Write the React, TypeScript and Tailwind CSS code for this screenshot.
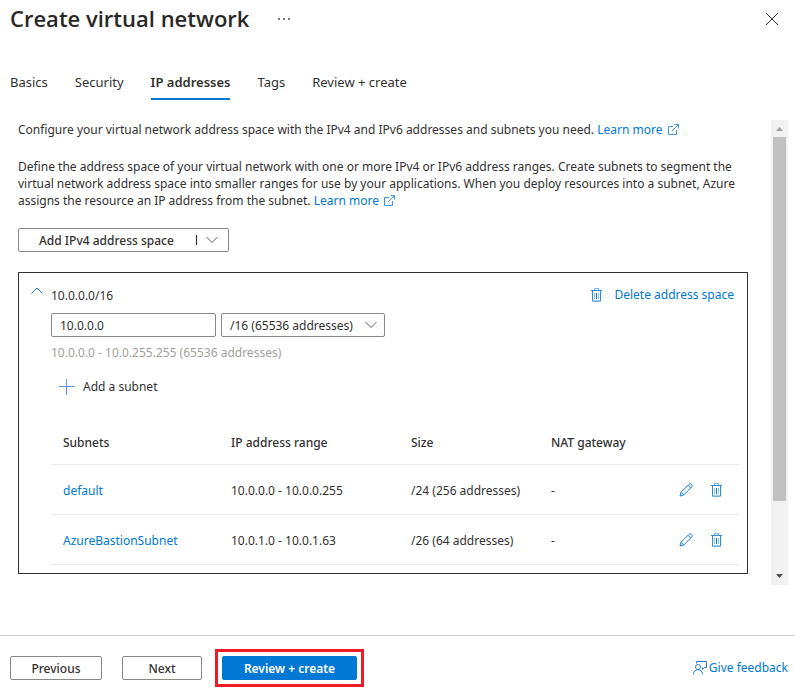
import React from "react";

const tabs = ["Basics", "Security", "IP addresses", "Tags", "Review + create"];

const subnets = [
  { name: "default", range: "10.0.0.0 - 10.0.0.255", size: "/24 (256 addresses)", nat: "-" },
  { name: "AzureBastionSubnet", range: "10.0.1.0 - 10.0.1.63", size: "/26 (64 addresses)", nat: "-" },
];

function Chevron({ up = false, className = "" }: { up?: boolean; className?: string }) {
  return (
    <svg width="12" height="8" viewBox="0 0 12 8" fill="none" stroke="currentColor" aria-hidden="true" className={className}>
      <path d={up ? "M.5 6.5 6 1l5.500 5.500" : "M.5 1 6 6.500 11.500 1"} />
    </svg>
  );
}

function External() {
  return (
    <svg width="11" height="11" viewBox="0 0 11 11" fill="none" stroke="currentColor" aria-hidden="true" className="ml-[2px] inline-block align-[-1px] text-[#3d96de]">
      <path d="M5 2.500H.5v8h8V6M6.500.5h4v4M10.500.5 4 7" />
    </svg>
  );
}

function Trash() {
  return (
    <svg width="12" height="14" viewBox="0 0 12 14" fill="none" aria-hidden="true" className="shrink-0">
      <path d="M0 2.500h11M1.500 2.500v10.500h8V2.500" stroke="#2b8cdb" />
      <path d="M3.500 2V.5h4V2M1.500 13.500h8" stroke="#6db1e8" />
      <path d="M3.500 5v6M7.500 5v6" stroke="#8cc2ee" />
      <path d="M5.500 5v6" stroke="#0078d4" />
    </svg>
  );
}

function Pencil() {
  return (
    <svg width="14" height="14" viewBox="0 0 14 14" fill="none" stroke="#1682d8" strokeLinejoin="round" aria-hidden="true">
      <path d="M1 13l1-3.700L10 1.300c1.600-1.600 4.300 1 2.700 2.700L4.700 12 1 13ZM2 9.300 4.700 12M9 2.300 11.700 5" />
    </svg>
  );
}

function Feedback() {
  return (
    <svg width="14" height="14" viewBox="0 0 14 14" fill="none" stroke="#2b7cd0" aria-hidden="true">
      <circle cx="5" cy="6" r="2.500" />
      <path d="M.5 13.500C.8 7.200 9.200 7.200 9.500 13.500M3.500 2.500v-2h10v6h-2l-2 2v-2" />
    </svg>
  );
}

export default function App() {
  return (
    <div className="flex min-h-screen flex-col bg-white font-['Noto_Sans','Open_Sans',sans-serif] text-[12px] leading-[17px] text-[#323130]">
      <header className="flex h-[38px] items-center pr-4 pl-[10px]">
        <h1 className="pb-[2px] font-['Open_Sans','Noto_Sans',sans-serif] text-[22px] leading-8 font-semibold text-[#292827]">Create virtual network</h1>
        <button type="button" aria-label="More options" className="ml-[25px] flex gap-[3px] p-1">
          <span className="size-[2px] bg-[#7a7876]" />
          <span className="size-[2px] bg-[#7a7876]" />
          <span className="size-[2px] bg-[#7a7876]" />
        </button>
        <button type="button" aria-label="Close" className="ml-auto">
          <svg width="14" height="14" viewBox="0 0 14 14" stroke="#323130" aria-hidden="true">
            <path d="m1 1 12 12M13 1 1 13" />
          </svg>
        </button>
      </header>

      <nav aria-label="Steps" className="mt-8 flex gap-[27px] pl-[10px] text-[13px]">
        {tabs.map((tab) => (
          <a
            key={tab}
            href="#"
            aria-current={tab === "IP addresses" ? "step" : undefined}
            className={
              tab === "IP addresses"
                ? "h-[30px] border-b-2 border-[#0078d4] pt-1 font-semibold"
                : "h-[30px] pt-1"
            }
          >
            {tab}
          </a>
        ))}
      </nav>

      <div className="mt-5 mr-[7px] mb-[50px] ml-[18px] flex flex-1">
        <main className="min-w-0 flex-1 pr-[23px]">
          <p className="mt-[1px]">
            Configure your virtual network address space with the IPv4 and IPv6 addresses and subnets you need.{" "}
            <a href="#" className="text-[#0078d4]">Learn more <External /></a>
          </p>
          <p className="mt-5">
            Define the address space of your virtual network with one or more IPv4 or IPv6 address ranges. Create subnets to segment the virtual network address space into smaller ranges for use by your applications. When you deploy resources into a subnet, Azure assigns the resource an IP address from the subnet.{" "}
            <a href="#" className="text-[#0078d4]">Learn more <External /></a>
          </p>

          <button type="button" className="mt-[19px] flex h-6 w-[211px] items-center rounded-[2px] border border-[#8a8886] pr-[10px] pl-5 font-medium">
            Add IPv4 address space
            <span className="ml-auto h-[10px] w-px bg-[#201f1e]" />
            <Chevron className="ml-[9px] text-[#605e5c]" />
          </button>

          <section className="mt-5 border border-[#323130] pt-[13px] pr-2 pb-2 pl-8">
            <div className="-ml-5 flex items-start">
              <button type="button" className="flex items-start gap-2 pt-[1px]">
                <Chevron up className="text-[#1682d8]" />
                10.0.0.0/16
              </button>
              <button type="button" className="mr-[5px] ml-auto flex items-center gap-[11px] text-[#0078d4]">
                <Trash />
                Delete address space
              </button>
            </div>
            <div className="mt-[9px] flex gap-[5px]">
              <input
                aria-label="Address space"
                defaultValue="10.0.0.0"
                className="h-6 w-[165px] rounded-[2px] border border-[#8a8886] px-2"
              />
              <div className="relative">
                <select aria-label="Address space size" className="h-6 w-[164px] appearance-none rounded-[2px] border border-[#8a8886] bg-white pr-6 pl-2">
                  <option>/16 (65536 addresses)</option>
                </select>
                <Chevron className="pointer-events-none absolute top-2 right-2 text-[#605e5c]" />
              </div>
            </div>
            <p className="mt-[7px] text-[#a19f9d]">10.0.0.0 - 10.0.255.255 (65536 addresses)</p>
            <button type="button" className="mt-[17px] ml-2 flex items-center gap-2">
              <svg width="16" height="16" viewBox="0 0 16 16" stroke="#5b93d6" aria-hidden="true">
                <path d="M7.500 0v16M0 7.500h16" />
              </svg>
              Add a subnet
            </button>

            <table className="mt-[25px] w-full table-fixed text-left">
              <thead>
                <tr className="h-11 border-b border-[#edebe9]">
                  <th className="w-[168px] pt-[2px] pl-3 font-medium">Subnets</th>
                  <th className="w-[180px] pt-[2px] pl-3 font-medium">IP address range</th>
                  <th className="w-[140px] pt-[2px] pl-3 font-medium">Size</th>
                  <th className="pt-[2px] pl-3 font-medium">NAT gateway</th>
                  <th className="w-[72px]" aria-label="Actions" />
                </tr>
              </thead>
              <tbody>
                {subnets.map((s) => (
                  <tr key={s.name} className="h-[50px] border-b border-[#edebe9]">
                    <td className="pt-[2px] pl-3"><a href="#" className="text-[#0078d4]">{s.name}</a></td>
                    <td className="pt-[2px] pl-3">{s.range}</td>
                    <td className="pt-[2px] pl-3">{s.size}</td>
                    <td className="pt-[2px] pl-3">{s.nat}</td>
                    <td className="pt-[2px]">
                      <div className="flex items-center gap-[18px] pl-3">
                        <button type="button" aria-label={`Edit ${s.name}`}><Pencil /></button>
                        <button type="button" aria-label={`Delete ${s.name}`}><Trash /></button>
                      </div>
                    </td>
                  </tr>
                ))}
              </tbody>
            </table>
          </section>
        </main>

        <div aria-hidden="true" className="flex w-[17px] flex-col items-center bg-[#f1f1f1]">
          <svg width="17" height="17" viewBox="0 0 17 17" fill="#a3a3a3"><path d="M5 11h7L8.500 7Z" /></svg>
          <div className="w-[13px] grow-[364] bg-[#c1c1c1]" />
          <div className="grow-[67]" />
          <svg width="17" height="17" viewBox="0 0 17 17" fill="#505050"><path d="M5 6h7l-3.500 4Z" /></svg>
        </div>
      </div>

      <footer className="flex h-14 items-center border-t border-[#d2d0ce] pt-2 pr-[7px] pl-[10px]">
        <button type="button" className="h-6 w-[92px] rounded-[2px] border border-[#8a8886] pt-[1px] font-medium">Previous</button>
        <button type="button" className="ml-5 h-6 w-20 rounded-[2px] border border-[#8a8886] pt-[1px] font-medium">Next</button>
        <div className="ml-[13px] border-3 border-[#ed1c24] p-1">
          <button type="button" className="block h-6 w-[135px] rounded-[2px] bg-[#0078d4] pt-[1px] font-semibold text-white">Review + create</button>
        </div>
        <a href="#" className="ml-auto flex items-center gap-[2px] text-[#0078d4]">
          <Feedback />
          Give feedback
        </a>
      </footer>
    </div>
  );
}
